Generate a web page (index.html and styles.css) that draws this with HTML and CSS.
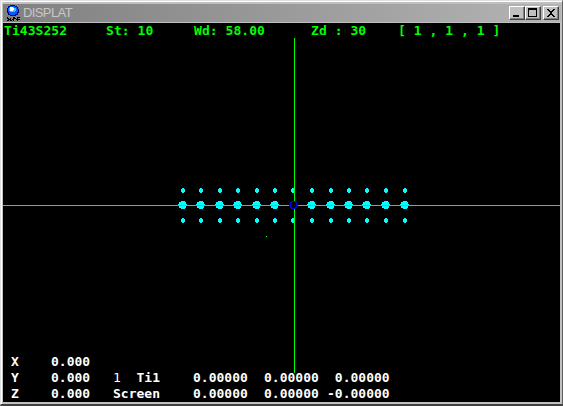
FILE: index.html
```
<!DOCTYPE html>
<html lang="en">
    <head>
        <meta charset="UTF-8" />
        <title>DISPLAT</title>
        <link rel="stylesheet" href="styles.css">
    </head>

    <body>
        <div class="window">
            <div class="titlebar">
                <svg class="logo" width="16" height="18" viewBox="0 0 16 18" shape-rendering="crispEdges">
                    <path d="M4 1h5v1h2v1h1v2h1v4h-1v2h-2v1H4v-1H2V9H1V4h1V2h2z" fill="#000080" />
                    <path d="M4 2h5v1h2v2h1v3h-1v2H9v1H4v-1H3V8H2V4h1V3h1z" fill="#0060ff" />
                    <path d="M4 3h4v1h2v3H9v1H4V7H3V4h1z" fill="#40c0ff" />
                    <path d="M4 3h3v1h1v2H7v1H4z" fill="#fff" />
                    <path d="M1 13h1v1h1v1h1v-1h1v2h1v-1h1v-2h2v1h1v1h1v-2h3v1h-2v1h2v1h-2v1h-1v-1h-1v-1H8v2H7v-1H6v1H4v-1H3v1H1v-1h1v-1H1z" fill="#000" />
                </svg>
                <span class="title">DISPLAT</span>
                <div class="buttons">
                    <button class="btn"><svg width="14" height="12" shape-rendering="crispEdges"><path d="M3 8h6v2H3z" /></svg></button>
                    <button class="btn"><svg width="14" height="12" shape-rendering="crispEdges"><path d="M2 1h9v9H2zM3 3v6h7V3z" fill-rule="evenodd" /></svg></button>
                    <button class="btn close"><svg width="14" height="12" shape-rendering="crispEdges"><path d="M3 2h2v1h1v1h2V3h1V2h2v1h-1v1H9v1H8v2h1v1h1v1h1v1H9V9H8V8H6v1H5v1H3V9h1V8h1V7h1V5H5V4H4V3H3z" /></svg></button>
                </div>
            </div>
            <div class="screen">
                <svg class="plot" width="557" height="379" viewBox="3 23 557 379" shape-rendering="crispEdges">
                    <g id="atoms" fill="#00ffff"></g>
                    <g fill="#00ff00">
                        <rect x="3" y="205" width="557" height="1" />
                        <rect x="294" y="38" width="1" height="335" />
                        <rect x="266" y="236" width="1" height="1" />
                    </g>
                    <!-- selected atom -->
                    <path d="M291 201h5v1h1v2h1v2h-1v2h-1v1h-5v-1h-1v-2h-1v-2h1v-2h1z" fill="#0000e0" />
                    <path d="M292 202h3v1h1v4h-1v1h-3v-1h-1v-4h1z" fill="#000" />
                </svg>
                <div class="status">
                    <span>Ti43S252</span><span>St: 10</span><span>Wd: 58.00</span><span>Zd : 30</span><span>[ 1 , 1 , 1 ]</span>
                </div>
                <div class="coords">
                    <div class="row"><span>X</span><span>0.000</span></div>
                    <div class="row"><span>Y</span><span>0.000</span><span><i>1</i>&nbsp; Ti1</span><span>0.00000</span><span>0.00000</span><span>&nbsp;0.00000</span></div>
                    <div class="row"><span>Z</span><span>0.000</span><span>Screen</span><span>0.00000</span><span>0.00000</span><span>-0.00000</span></div>
                </div>
            </div>
        </div>
        <script>
            var atoms = document.getElementById('atoms')
            var cols = [183, 201, 220, 238, 257, 275, 293, 312, 331, 349, 367, 386, 405]
            var small = 'h2v1h1v3h-1v1h-2v-1h-1v-3h1z'
            var big = 'h4v1h1v2h1v2h-1v2h-1v1h-4v-1h-2v-2h-1v-2h1v-2h2z'

            function dot(x, y, shape) {
                var p = document.createElementNS('http://www.w3.org/2000/svg', 'path')
                p.setAttribute('d', 'M' + x + ' ' + y + shape)
                atoms.appendChild(p)
            }
            for (var i = 0; i < cols.length; i++) {
                dot(cols[i] - 1, 188, small)
                dot(cols[i] - 1, 218, small)
                if (i != 6) dot(cols[i] - 2, 201, big)
            }
        </script>
    </body>
</html>
```
FILE: styles.css
```
body {
    margin: 0;
    background: #c0c0c0;
    overflow: hidden;
}

.window {
    box-sizing: border-box;
    width: 563px;
    height: 406px;
    padding-left: 1px;
    display: flex;
    flex-direction: column;
    background: #c0c0c0;
    border-top: 1px solid #dfdfdf;
    border-left: 1px solid #dfdfdf;
    border-right: 1px solid #606060;
    border-bottom: 2px solid #404040;
    box-shadow: inset 1px 1px 0 #fff;
}

.titlebar {
    display: flex;
    height: 18px;
    margin: 3px 1px 1px;
    background: linear-gradient(to right, #808080, #b4b4b4);
}

.logo {
    margin-left: 3px;
}

.title {
    margin-left: 1px;
    font: 13px/18px "Liberation Sans", Arial, sans-serif;
    letter-spacing: -0.6px;
    color: #c8c8c8;
    flex: 1;
}

.buttons {
    display: flex;
    padding: 2px 2px 0 0;
}

.btn {
    box-sizing: border-box;
    width: 16px;
    height: 14px;
    padding: 0;
    border: 1px solid;
    border-color: #fff #404040 #404040 #fff;
    background: #c0c0c0;
    box-shadow: inset -1px -1px 0 #808080;
}

.btn svg {
    display: block;
}

.close {
    margin-left: 2px;
}

.screen {
    position: relative;
    display: flex;
    flex-direction: column;
    justify-content: space-between;
    width: 557px;
    height: 379px;
    margin-left: 1px;
    background: #000;
    font: bold 13px/16px "DejaVu Sans Mono", monospace;
}

/* crosshair and atoms sit behind the text */
.plot {
    position: absolute;
    top: 0;
    left: 0;
}

.status,
.coords {
    position: relative;
}

.status {
    display: grid;
    grid-template-columns: 102px 88px 117px 87px auto;
    padding-left: 1px;
    color: #00ff00;
    letter-spacing: 0.05px;
}

.coords {
    padding-left: 8px;
    color: #fff;
}

.row {
    display: grid;
    grid-template-columns: 40px 62px 80px 71px 63px auto;
    height: 16px;
}

.row i {
    font-style: normal;
    font-weight: normal;
}
```
